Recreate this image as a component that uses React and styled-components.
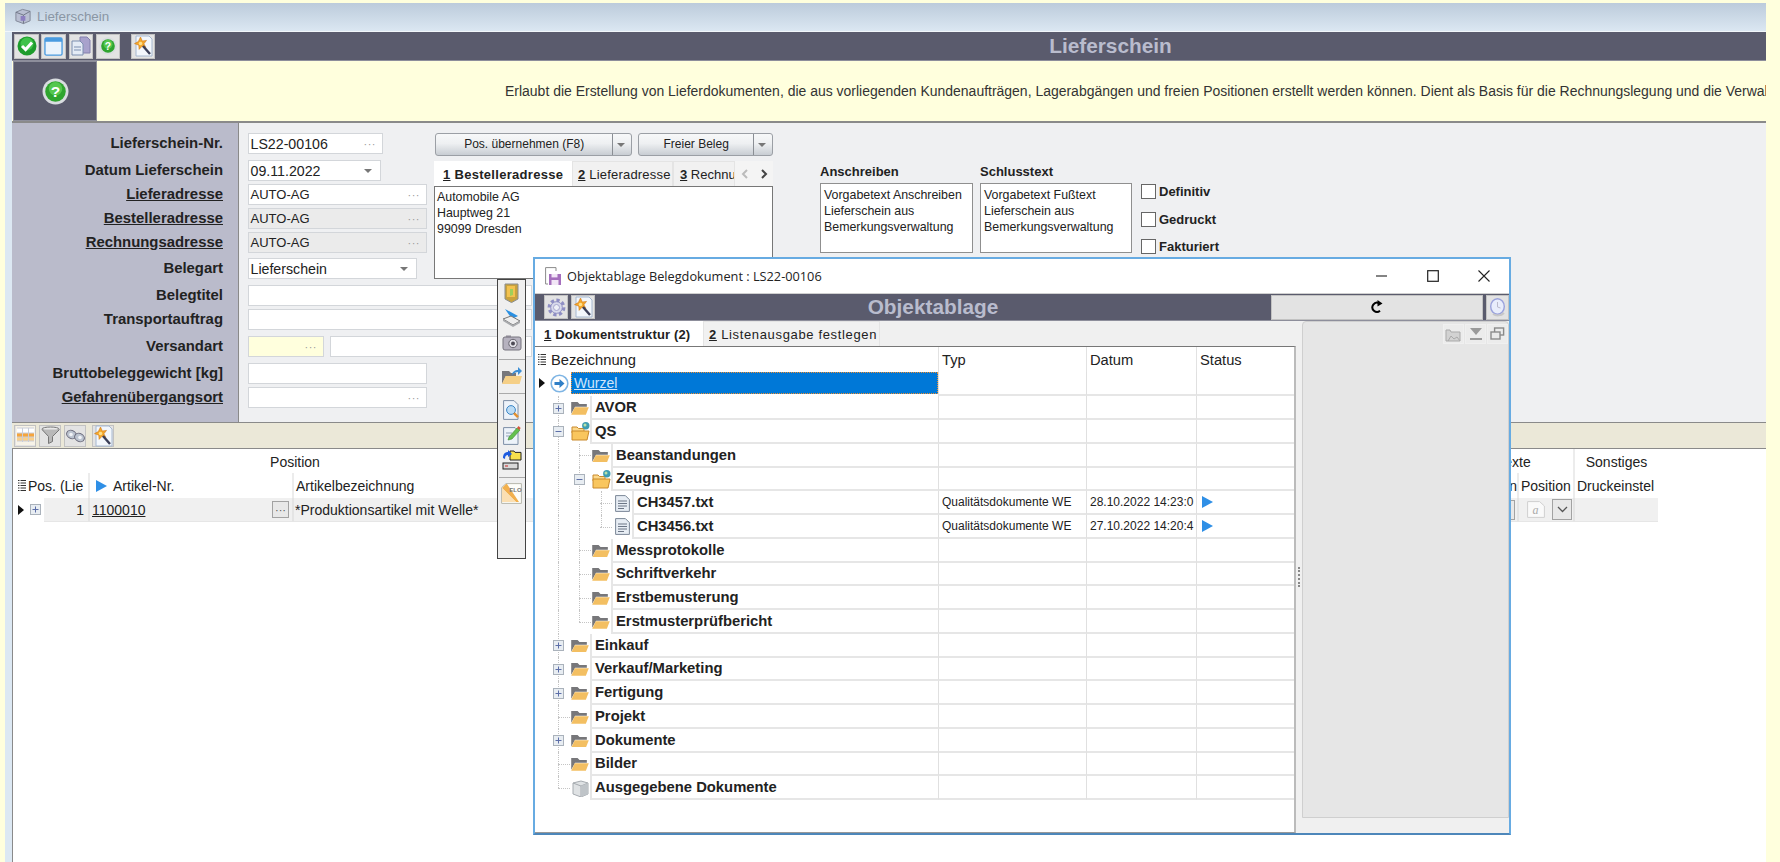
import React from "react";
import styled, { createGlobalStyle } from "styled-components";

const Global = createGlobalStyle`
  html, body { margin: 0; padding: 0; overflow: hidden; background: #ffffdd; }
  * { box-sizing: border-box; }
`;

/* ---------- icons ---------- */
const CheckIcon = () => (
  <svg width="20" height="20" viewBox="0 0 20 20"><circle cx="10" cy="10" r="9.5" fill="#1e9c2c" /><circle cx="10" cy="8" r="6.5" fill="#3fc24a" /><path d="M5 10l3.6 3.6L15 6.6" fill="none" stroke="#fff" strokeWidth="3" /></svg>
);
const WindowIcon = () => (
  <svg width="19" height="19" viewBox="0 0 20 20"><rect x="1" y="1" width="18" height="18" rx="1.5" fill="#eaf3fc" stroke="#4a9be0" strokeWidth="1.4" /><rect x="1" y="1" width="18" height="4" fill="#4a9be0" /></svg>
);
const PagesIcon = () => (
  <svg width="20" height="20" viewBox="0 0 20 20"><path d="M9 1h7l3 3v13H9z" fill="#a8a2cc" stroke="#8480ad" /><path d="M1 5h8l3 3v11H1z" fill="#e4ebf5" stroke="#7d8fb0" /><path d="M3 11h7M3 14h7" stroke="#7d8fb0" /></svg>
);
const HelpSmallIcon = ({ s = 18 }) => (
  <svg width={s} height={s} viewBox="0 0 20 20"><circle cx="10" cy="10" r="9.6" fill="#d9dde0" /><circle cx="10" cy="10" r="7.6" fill="#2fa52f" /><circle cx="10" cy="8" r="5" fill="#55c74f" /><text x="10" y="14" textAnchor="middle" fontFamily="Liberation Sans" fontWeight="700" fontSize="11.5" fill="#fff">?</text></svg>
);
const WandIcon = () => (
  <svg width="20" height="22" viewBox="0 0 20 22"><path d="M3 1h13l3 3v17H3z" fill="#f3f7fc" stroke="#a6b8d0" /><path d="M7.500 2l1.800 4 4.200-.6-2.600 3.400 2 3.600-4-1-2.800 3-.3-4.200L1.500 8.600l3.800-2z" fill="#f4a62a" stroke="#d07a1c" strokeWidth=".6" /><circle cx="7.500" cy="8.500" r="1.800" fill="#fde08a" /><path d="M10 11l7 8" stroke="#3b3f58" strokeWidth="2.400" /></svg>
);
const TableIcon = () => (
  <svg width="19" height="19" viewBox="0 0 19 19"><rect width="19" height="19" fill="#f7f3e7" /><path d="M1 7h17v4H1z" fill="#f6a53b" /><path d="M1 11h17v4H1z" fill="#f9d08c" /><path d="M1 2h17v5H1z" fill="#fff" /><path d="M1 2h17M1 7h17M1 11h17M1 15h17M6.500 2v14M12.500 2v14" stroke="#c9cdd8" fill="none" /></svg>
);
const FunnelIcon = () => (
  <svg width="19" height="19" viewBox="0 0 19 19"><ellipse cx="9.500" cy="3" rx="8.500" ry="2" fill="#e8e8e8" stroke="#777" /><path d="M1 3.500l6.500 7v7l4-2v-5l7-7" fill="#b9b9b9" stroke="#777" /></svg>
);
const BinocularsIcon = () => (
  <svg width="19" height="15" viewBox="0 0 19 15"><ellipse cx="5.500" cy="6.500" rx="5" ry="4" fill="#bcc4d0" stroke="#667" transform="rotate(25 5.500 6.500)" /><ellipse cx="13.500" cy="9.500" rx="5" ry="4" fill="#bcc4d0" stroke="#667" transform="rotate(25 13.500 9.500)" /><circle cx="5" cy="6.500" r="1.800" fill="#f1f3f6" /><circle cx="14" cy="9.500" r="1.800" fill="#f1f3f6" /></svg>
);
const FolderOpen = ({ w = 18 }) => (
  <svg width={w} height={w * 0.76} viewBox="0 0 18 14"><path d="M0 1h6.500l2 2H16v3H4L0 13z" fill="#77777a" /><path d="M3.600 6.500H18L15 14H0z" fill="#f3bf62" /></svg>
);
const FolderGlobe = () => (
  <svg width="19" height="19" viewBox="0 0 19 19"><path d="M1 5h5l1.500 1.500H13V11H1z" fill="#fcd98c" stroke="#c98a2c" /><path d="M1 18V9h17l-2 9z" fill="#f9c65e" stroke="#c98a2c" /><circle cx="14.800" cy="3.800" r="3.700" fill="#3f9db2" /><circle cx="14" cy="3" r="1.500" fill="#b8e2a8" /></svg>
);
const DocIcon = () => (
  <svg width="15" height="17" viewBox="0 0 15 17"><path d="M.6.6h9.800L14.400 4.600v11.800H.6z" fill="#e7edf4" stroke="#7b8797" /><path d="M3 6h9M3 8.500h9M3 11h9M3 13.500h6" stroke="#6c7686" /></svg>
);
const CubeIcon = () => (
  <svg width="17" height="17" viewBox="0 0 17 17"><path d="M1 3l8-2 7 2v11l-7 3-8-3z" fill="#dfe2e4" stroke="#a6abb0" /><path d="M1 3l8 3 7-3M9 6v11" fill="none" stroke="#a6abb0" /><path d="M9 6l7-3v11l-7 3z" fill="#bfc4c8" /></svg>
);
const ListGlyph = () => (
  <svg width="8" height="12" viewBox="0 0 8 12"><path d="M0 .5h1.500M2.500 .5H8M0 3h1.500M2.500 3H8M0 5.500h1.500M2.500 5.500H8M0 8h1.500M2.500 8H8M0 10.500h1.500M2.500 10.500H8" stroke="#333" /></svg>
);
const RowMark = () => (
  <svg width="6" height="10" viewBox="0 0 6 10"><path d="M0 0l6 5-6 5z" fill="#111" /></svg>
);
const BluePlay = ({ w = 11, h = 12 }) => (
  <svg width={w} height={h} viewBox="0 0 11 12"><path d="M0 0l11 6L0 12z" fill="#2f8fe6" /></svg>
);
const Gear = () => (
  <svg width="19" height="19" viewBox="0 0 19 19"><circle cx="9.500" cy="9.500" r="7.200" fill="none" stroke="#8f8fc4" strokeWidth="3.400" strokeDasharray="3.200 2.400" /><circle cx="9.500" cy="9.500" r="5.800" fill="#d9dbec" stroke="#8f8fc4" /><circle cx="9.500" cy="9.500" r="3" fill="#eef0f7" stroke="#a6a6cd" /></svg>
);
const Refresh = () => (
  <svg width="14" height="14" viewBox="0 0 14 14"><path d="M10 10.800A4.600 4.600 0 1 1 9.200 3.200" fill="none" stroke="#000" strokeWidth="2" /><path d="M7.500 0l5 3.400-5 3z" fill="#000" /></svg>
);
const Clock = () => (
  <svg width="16" height="19" viewBox="0 0 16 19"><ellipse cx="7.500" cy="8.500" rx="6.800" ry="7.800" fill="#e8edfb" stroke="#9aa2dc" strokeWidth="1.400" /><path d="M7.500 4v5l3 1" stroke="#bbc" fill="none" /><path d="M3 16c3 2 8 2 11-1" stroke="#c7c7c7" strokeWidth="2" fill="none" /></svg>
);
const WinMin = () => <svg width="12" height="12" viewBox="0 0 12 12"><path d="M0 6h11" stroke="#333" strokeWidth="1.200" /></svg>;
const WinMax = () => <svg width="12" height="12" viewBox="0 0 12 12"><rect x=".7" y=".7" width="10.600" height="10.600" fill="none" stroke="#222" strokeWidth="1.200" /></svg>;
const WinClose = () => <svg width="12" height="12" viewBox="0 0 12 12"><path d="M.5.5l11 11M11.500.5l-11 11" stroke="#222" strokeWidth="1.100" /></svg>;
const AppCube = () => (
  <svg width="18" height="17" viewBox="0 0 19 17"><path d="M2 4l7-3 8 2v10l-7 3-8-3z" fill="#b9bfd2" stroke="#7f8595" /><path d="M2 4l8 3 7-4M10 7v9" fill="none" stroke="#6f7585" /><rect x="7" y="8" width="5" height="5" fill="#8d7fc0" /></svg>
);
const FloppyDoc = () => (
  <svg width="17" height="19" viewBox="0 0 17 19"><path d="M3 17H.6V.6H11V4" fill="none" stroke="#8a8a8a" /><path d="M4 7h12v11H4z" fill="#a56fbd" /><rect x="6.500" y="7" width="6" height="3.400" fill="#f2e6f6" /><rect x="6.500" y="13" width="7" height="5" fill="#f2e6f6" /></svg>
);
const DoorIcon = () => (
  <svg width="15" height="20" viewBox="0 0 15 20"><path d="M1 1h13v15l-6.500 3.600L1 16z" fill="#c9a23c" stroke="#8a8d8f" /><path d="M3 3h8v11H3z" fill="#f3c24f" /><path d="M6 6h3v6l-3 1z" fill="#9fcf5a" /></svg>
);
const ScannerIcon = () => (
  <svg width="19" height="19" viewBox="0 0 19 19"><path d="M3 1l13 7-6 3z" fill="#2a90e2" /><path d="M1 11l8-3 9 5-7 4z" fill="#eee" stroke="#777" /><path d="M1 11v2l10 6 7-4v-2l-7 4z" fill="#a9abae" /></svg>
);
const CameraIcon = () => (
  <svg width="20" height="16" viewBox="0 0 20 16"><rect x="1" y="2" width="18" height="13" rx="2" fill="#b6b2bf" stroke="#77747f" /><rect x="4" y=".5" width="5" height="2" fill="#8c8894" /><circle cx="11" cy="8.500" r="4.200" fill="#e3e1e8" stroke="#66636d" /><circle cx="11" cy="8.500" r="2" fill="#4d4a55" /></svg>
);
const FolderShareIcon = () => (
  <svg width="20" height="17" viewBox="0 0 20 17"><path d="M0 4h7l2 2h5v3H4L0 17z" fill="#77777a" /><path d="M3.600 9H20l-2.400 8H0z" fill="#f5cf86" /><path d="M10 8c0-3 3-5 6-5V0l4 4-4 4V5c-2 0-4 1-6 3z" fill="#3d8fd6" /></svg>
);
const DocSearchIcon = () => (
  <svg width="17" height="20" viewBox="0 0 17 20"><path d="M.6.6h10.400L15 4.600v14.800H.6z" fill="#edf3fa" stroke="#7c8ea6" /><circle cx="8" cy="10" r="4.400" fill="#bcdcf5" stroke="#3a86c6" /><path d="M11 13.200l4 4" stroke="#e2902f" strokeWidth="2.400" /></svg>
);
const DocEditIcon = () => (
  <svg width="18" height="20" viewBox="0 0 18 20"><path d="M.6 2.600h11.400l3 3v13.800H.6z" fill="#edf3fa" stroke="#7c8ea6" /><path d="M3 8h6M3 11h4" stroke="#8fa0b5" /><path d="M5 15l1-3 8-9 3 2-8 9z" fill="#63c14f" stroke="#3f8a34" strokeWidth=".6" /><path d="M14 3l1.500-2 2.200 2-1.400 2z" fill="#d8573c" /></svg>
);
const TransferIcon = () => (
  <svg width="20" height="21" viewBox="0 0 20 21"><path d="M8 2h4l1 1.400h6V11H8z" fill="#f6e04c" stroke="#222" /><path d="M1 9c0-4 2-6 5-6V1l4 4-4 3V6C4 6 3 7 3 10z" fill="#1e5ce0" /><rect x="1" y="14" width="15" height="6" fill="#d8d8d8" stroke="#222" /><path d="M3 17h3" stroke="#c22" /></svg>
);
const EloIcon = () => (
  <svg width="21" height="21" viewBox="0 0 21 21"><path d="M.6 4.600L5 .6h15.400v19.800H.6z" fill="#fdfdf9" stroke="#b7b7ad" /><path d="M1 5l4-4 1 0 12 18h-3z" fill="#f2b04e" /><path d="M1 5l14 14H1z" fill="#fbdfb2" /><text x="14.500" y="9" textAnchor="middle" fontFamily="Liberation Sans" fontWeight="700" fontSize="6" fill="#777">ELO</text></svg>
);
const PaneFolder = () => (
  <svg width="17" height="17" viewBox="0 0 17 17"><path d="M1 4h4l1 2h9v9H1z" fill="#d2d2d2" stroke="#a9a9a9" /><path d="M3 15l3-5 3 3 3-2 3 4" fill="none" stroke="#a9a9a9" /></svg>
);
const PaneDown = () => (
  <svg width="14" height="14" viewBox="0 0 14 14"><path d="M1 1h12L7 8z" fill="#9a9a9a" /><rect x="1" y="11" width="12" height="2" fill="#9a9a9a" /></svg>
);
const PaneRestore = () => (
  <svg width="15" height="14" viewBox="0 0 15 14"><rect x="4.600" y="1" width="9" height="7" fill="none" stroke="#8a8a8a" strokeWidth="1.400" /><rect x="1" y="5" width="9" height="7" fill="#e9e9e9" stroke="#8a8a8a" strokeWidth="1.400" /></svg>
);
const TextA = () => (
  <svg width="18" height="17" viewBox="0 0 18 17"><path d="M.6.6h12L17.400 5v11.400H.6z" fill="#fafafa" stroke="#d0d0d0" /><text x="8.500" y="12.500" textAnchor="middle" fontFamily="Liberation Serif" fontStyle="italic" fontSize="12" fill="#aaa">a</text></svg>
);
const Chevron = () => (
  <svg width="11" height="7" viewBox="0 0 11 7"><path d="M1 1l4.500 4.500L10 1" fill="none" stroke="#555" strokeWidth="1.300" /></svg>
);
const ArrowCircle = () => (
  <svg width="19" height="19" viewBox="0 0 19 19"><circle cx="9.500" cy="9.500" r="8.300" fill="#fff" stroke="#7fb5e4" strokeWidth="1.600" /><path d="M4.500 8h5V5l5 4.500-5 4.500v-3h-5z" fill="#2f7fc7" /></svg>
);
const ExpandBox = ({ open }) => (
  <svg width="11" height="11" viewBox="0 0 11 11"><rect x=".5" y=".5" width="10" height="10" fill="#e8edf2" stroke="#aab2bb" /><path d={open ? "M2.500 5.500h6" : "M2.500 5.500h6M5.500 2.500v6"} stroke="#5c6ea8" /></svg>
);

/* ---------- shell ---------- */
const Page = styled.div`
  position: relative;
  width: 1780px;
  height: 862px;
  padding: 3px 14px 0 5px;
  overflow: hidden;
  background: #ffffdd;
  color: #222;
  font-family: "Liberation Sans", Arial, sans-serif;
`;
const MainWindow = styled.div`
  display: flex;
  flex-direction: column;
  height: 859px;
  background: #dce8f3;
`;
const TitleBar = styled.div`
  display: flex;
  align-items: center;
  gap: 5px;
  height: 29px;
  padding: 0 0 1px 9px;
  border-bottom: 1px solid #f1f6fa;
  background: linear-gradient(#bccbdb, #dbe7f2);
  color: #8a96a4;
  font-size: 13.4px;
`;
const Shell = styled.div`
  display: flex;
  flex: 1;
  flex-direction: column;
  min-height: 0;
  margin-left: 7px;
  background: #fff;
`;
const TopBar = styled.div`
  display: flex;
  align-items: center;
  height: 29px;
  padding-left: 2px;
  border-bottom: 1px solid #8d8e9b;
  background: #5a5b6d;
`;
const ToolButton = styled.div`
  display: flex;
  flex: none;
  align-items: center;
  justify-content: center;
  width: ${(p) => p.$w || 25}px;
  height: ${(p) => p.$h || 25}px;
  margin-left: ${(p) => p.$ml || 0}px;
  border: 1px solid #c2c2c2;
  background: #e3e3e3;
`;
const BarTitle = styled.div`
  flex: 1;
  padding-left: ${(p) => p.$pl || 0}px;
  color: #b9bccd;
  font-size: 20.800px;
  font-weight: 700;
  text-align: center;
`;
const HelpRow = styled.div`
  display: flex;
  align-items: center;
  height: 62px;
  border-bottom: 2px solid #8a8a8a;
  background: #ffffdd;
`;
const HelpTile = styled.div`
  display: flex;
  flex: none;
  align-items: center;
  justify-content: center;
  width: 84px;
  height: 60px;
  margin-left: 1px;
  border: 1px solid #8d8e9b;
  background: #5a5b6d;
`;
const HelpText = styled.div`
  flex: 1;
  overflow: hidden;
  padding-left: 408px;
  color: #333;
  font-size: 13.970px;
  white-space: nowrap;
`;
const FormArea = styled.div`
  display: flex;
  flex: none;
  height: 299px;
`;
const LabelColumn = styled.div`
  flex: none;
  width: 226px;
  padding-top: 10px;
  background: #babbcb;
`;
const FormLabel = styled.div`
  height: 21px;
  margin-top: ${(p) => p.$gap}px;
  padding-right: 15px;
  font-size: 14.900px;
  font-weight: 700;
  line-height: 21px;
  text-align: right;
  text-decoration: ${(p) => (p.$link ? "underline" : "none")};
`;
const FormBody = styled.div`
  flex: 1;
  padding: 10px 0 0 9px;
  border-left: 1px solid #8a8a8a;
  background: #eff0f2;
`;
const TopBlock = styled.div`
  display: flex;
  height: 146px;
`;
const FieldStack = styled.div`
  flex: none;
  width: ${(p) => p.$w || "auto"};
`;
const FieldRow = styled.div`
  display: flex;
  gap: 6px;
  margin-top: ${(p) => p.$gap}px;
`;
const Field = styled.div`
  display: flex;
  align-items: center;
  justify-content: space-between;
  width: ${(p) => p.$w}px;
  height: 21px;
  padding: 0 6px 0 1.500px;
  border: 1.500px solid #d3d6da;
  background: ${(p) => p.$bg || "#fff"};
  font-size: ${(p) => p.$fs || 14.200}px;
`;
const Dots = styled.span`
  color: #9a9a9a;
  font-size: 11px;
  letter-spacing: 0.5px;
`;
const Caret = styled.span`
  width: 0;
  height: 0;
  margin-right: 2px;
  border-top: 4px solid #777;
  border-right: 4px solid transparent;
  border-left: 4px solid transparent;
`;
const AddressBlock = styled.div`
  flex: none;
  width: 339px;
`;
const ButtonRow = styled.div`
  display: flex;
  gap: 6px;
  margin-left: 1px;
`;
const SplitButton = styled.div`
  display: grid;
  grid-template-columns: 1fr 18px;
  width: ${(p) => p.$w}px;
  height: 23px;
  overflow: hidden;
  border: 1px solid #9b9fa5;
  border-radius: 3px;
  background: linear-gradient(#f7f8f9, #eef0f2 45%, #c8cdd3);
  font-size: 12px;
`;
const SplitLabel = styled.div`
  border-right: 1px solid #8a8e94;
  line-height: 21px;
  text-align: center;
`;
const SplitArrow = styled.div`
  display: flex;
  align-items: center;
  justify-content: center;
`;
const TabStrip = styled.div`
  display: flex;
  align-items: stretch;
  height: 25px;
  margin-top: ${(p) => p.$mt || 0}px;
`;
const Tab = styled.div`
  flex: none;
  width: ${(p) => p.$w}px;
  padding-left: ${(p) => p.$pl ?? 9}px;
  overflow: hidden;
  border: 1px solid ${(p) => (p.$active ? "#fff" : "#e4e4e4")};
  border-bottom: 0;
  background: ${(p) => (p.$active ? "#fff" : "#f1f1f1")};
  font-size: 13px;
  font-weight: ${(p) => (p.$active ? 700 : 400)};
  letter-spacing: ${(p) => p.$ls ?? 0.2}px;
  line-height: 25px;
  white-space: nowrap;
`;
const TabKey = styled.span`
  font-weight: 700;
  text-decoration: underline;
`;
const TabNav = styled.div`
  display: flex;
  flex: 1;
  align-items: center;
  justify-content: space-around;
  background: #f4f4f4;
`;
const TextBox = styled.div`
  height: ${(p) => p.$h}px;
  padding: ${(p) => p.$pad || "2px 2px"};
  border: 1px solid ${(p) => p.$bc || "#777"};
  background: #fff;
  font-size: 12.400px;
  line-height: 16px;
  white-space: pre-line;
`;
const NoteGroup = styled.div`
  flex: none;
  width: ${(p) => p.$w}px;
  margin-left: ${(p) => p.$ml}px;
  padding-top: 30px;
`;
const NoteTitle = styled.div`
  height: 20px;
  font-size: 13px;
  font-weight: 700;
  line-height: 17px;
`;
const CheckColumn = styled.div`
  flex: none;
  margin-left: 9px;
  padding-top: 51px;
`;
const CheckRow = styled.div`
  display: flex;
  align-items: center;
  gap: 3px;
  height: 15px;
  margin-bottom: ${(p) => p.$mb}px;
  font-size: 13px;
  font-weight: 700;
`;
const CheckBox = styled.span`
  width: 15px;
  height: 15px;
  border: 1px solid #666;
  background: #fff;
`;
const LowerBar = styled.div`
  display: flex;
  flex: none;
  align-items: center;
  height: 27px;
  padding-left: 2px;
  border-top: 1px solid #8a8a8a;
  border-bottom: 1px solid #8a8a8a;
  background: #ebe8d8;
`;

/* ---------- lower grid ---------- */
const LowerGrid = styled.div`
  display: grid;
  flex: 1;
  grid-template-columns: 13px 62px 204px 272px 799px 154px 56px 85px;
  grid-template-rows: 24px 25px 24px 1fr;
  border-left: 1px solid #8a8a8a;
  font-size: 14px;
`;
const GroupHead = styled.div`
  grid-column: ${(p) => p.$col};
  padding-top: 5px;
  padding-left: ${(p) => p.$pl || 0}px;
  border-left: ${(p) => (p.$sep ? "2px solid #ececec" : "0")};
  text-align: center;
  white-space: nowrap;
`;
const ColHead = styled.div`
  display: flex;
  align-items: center;
  justify-content: ${(p) => p.$justify || "flex-start"};
  gap: 6px;
  height: 25px;
  padding-left: ${(p) => p.$pl ?? 2}px;
  border-left: ${(p) => (p.$sep ? "2px solid #ececec" : "0")};
  white-space: nowrap;
`;
const GridCell = styled.div`
  display: flex;
  align-items: center;
  justify-content: ${(p) => p.$justify || "flex-start"};
  gap: 4px;
  height: 24px;
  padding: 0 ${(p) => p.$pr || 0}px 0 ${(p) => p.$pl || 0}px;
  border-bottom: 1px solid #e6e6e6;
  border-left: ${(p) => (p.$sep ? "2px solid #e4e4e4" : "0")};
  background: ${(p) => p.$bg || "#f0f0f0"};
  white-space: nowrap;
`;
const GutterCell = styled.div`
  display: flex;
  align-items: center;
  padding-left: 5px;
`;
const ExpandGap = styled.div`
  display: flex;
  align-items: center;
  width: 18px;
  height: 24px;
  padding-left: 4px;
  background: #fff;
`;
const LinkText = styled.span`
  text-decoration: underline;
`;
const MiniButton = styled.div`
  display: flex;
  align-items: center;
  justify-content: center;
  width: ${(p) => p.$w || 17}px;
  height: ${(p) => p.$h || 17}px;
  margin-left: auto;
  margin-right: ${(p) => p.$mr || 0}px;
  border: 1px solid #a2a2a2;
  background: #e8e8e8;
  color: #555;
  font-size: 11px;
`;

/* ---------- popup toolbar ---------- */
const SideBar = styled.div`
  position: absolute;
  top: 279px;
  left: 497px;
  z-index: 1;
  display: flex;
  flex-direction: column;
  align-items: center;
  width: 29px;
  height: 280px;
  border: 1px solid #444;
  background: #efefef;
`;
const SideSlot = styled.div`
  display: flex;
  flex: none;
  align-items: center;
  justify-content: center;
  width: 100%;
  height: 25px;
  margin-top: ${(p) => p.$mt || 0}px;
`;
const SideRule = styled.div`
  flex: none;
  width: 26px;
  height: 1px;
  margin-top: ${(p) => p.$mt}px;
  background: #aaa;
`;

/* ---------- dialog ---------- */
const Dialog = styled.div`
  position: absolute;
  top: 257px;
  left: 533px;
  z-index: 2;
  display: flex;
  flex-direction: column;
  width: 978px;
  height: 578px;
  border: 2px solid #67abe2;
  border-bottom-color: #4d87ba;
  background: #fff;
`;
const DialogTitle = styled.div`
  display: flex;
  flex: none;
  align-items: center;
  height: 34px;
  padding-left: 10px;
  color: #222;
  font-family: "Open Sans", "Liberation Sans", sans-serif;
  font-size: 12.750px;
`;
const DialogCaption = styled.div`
  flex: 1;
  margin-left: 5px;
`;
const WinButton = styled.div`
  display: flex;
  align-items: center;
  justify-content: center;
  width: 51px;
  height: 34px;
`;
const DialogBar = styled.div`
  display: flex;
  flex: none;
  align-items: center;
  height: 28px;
  padding-left: 9px;
  border-top: 1px solid #d0d0d0;
  border-bottom: 1px solid #8d8e9b;
  background: #5a5b6d;
`;
const DialogBody = styled.div`
  display: flex;
  flex: 1;
  min-height: 0;
  background: #f0f0f0;
`;
const TreePane = styled.div`
  display: flex;
  flex: none;
  flex-direction: column;
  width: 761px;
`;
const TreeBox = styled.div`
  flex: 1;
  border-top: 1px solid #777;
  border-right: 2px solid #bbb;
  border-bottom: 1px solid #999;
  background: #fff;
`;
const TreeHead = styled.div`
  display: grid;
  grid-template-columns: 12px 391px 148px 110px 98px;
  height: 25px;
  font-size: 14.700px;
`;
const TreeHeadCell = styled.div`
  display: flex;
  align-items: center;
  padding-top: 1px;
  padding-left: ${(p) => p.$pl ?? 3}px;
  border-left: ${(p) => (p.$sep ? "1px solid #e2e2e2" : "0")};
`;
const TreeRow = styled.div`
  position: relative;
  display: grid;
  grid-template-columns: 403px 148px 110px 98px;
  height: 23.760px;
`;
const NameArea = styled.div`
  display: flex;
  align-items: center;
  padding-left: ${(p) => 18 + p.$level * 21}px;
`;
const ExpSlot = styled.div`
  position: relative;
  z-index: 1;
  display: flex;
  flex: none;
  width: 17px;
  height: 11px;
`;
const IconSlot = styled.div`
  position: relative;
  z-index: 1;
  display: flex;
  flex: none;
  align-items: center;
  justify-content: center;
  width: 20px;
  height: 100%;
`;
const NameCell = styled.div`
  flex: 1;
  align-self: stretch;
  padding-left: 3px;
  border-bottom: 2px solid #e6e6e6;
  border-left: 2px solid #e6e6e6;
  font-size: 14.800px;
  font-weight: 700;
  line-height: 22px;
  white-space: nowrap;
`;
const DataCell = styled.div`
  display: flex;
  align-items: center;
  overflow: hidden;
  padding-left: ${(p) => p.$pl ?? 3}px;
  border-bottom: 2px solid #e6e6e6;
  border-left: 1px solid #e0e0e0;
  font-size: 12px;
  white-space: nowrap;
`;
const Guide = styled.span`
  position: absolute;
  top: 0;
  bottom: ${(p) => (p.$half ? "50%" : "0")};
  left: ${(p) => p.$x}px;
  border-left: 1px dotted #c4c4c4;
`;
const Stub = styled.span`
  position: absolute;
  top: 50%;
  left: ${(p) => p.$x}px;
  width: ${(p) => p.$w}px;
  border-top: 1px dotted #c4c4c4;
`;
const RootRow = styled.div`
  display: grid;
  grid-template-columns: 403px 148px 110px 98px;
  height: 24px;
`;
const RootName = styled.div`
  display: flex;
  align-items: center;
  height: 22px;
  padding-left: 2px;
`;
const RootMark = styled.div`
  display: flex;
  flex: none;
  align-items: center;
  width: 13px;
  padding-left: 2px;
`;
const RootIcon = styled.div`
  display: flex;
  flex: none;
  width: 21px;
`;
const RootSelect = styled.div`
  flex: 1;
  height: 22px;
  padding-left: 2px;
  border: 1px dotted #f09030;
  background: #0078d7;
  color: #cfe6fb;
  font-size: 14px;
  line-height: 20px;
  text-decoration: underline;
`;
const Splitter = styled.div`
  display: flex;
  flex: none;
  align-items: center;
  justify-content: center;
  width: 6px;
`;
const Grip = styled.div`
  width: 2px;
  height: 20px;
  border-left: 2px dotted #888;
`;
const SidePane = styled.div`
  display: flex;
  flex: 1;
  flex-direction: column;
`;
const SideCard = styled.div`
  display: flex;
  justify-content: flex-end;
  gap: 1px;
  height: 497px;
  padding-top: 2px;
  border: 1px solid #cfcfcf;
  border-radius: 4px 4px 0 0;
  background: #e6e6e6;
`;
const PaneButton = styled.div`
  display: flex;
  align-items: center;
  justify-content: center;
  width: 21px;
  height: 20px;
  border: 1px solid #f0f0f0;
  background: #ececec;
`;

/* ---------- data ---------- */
const upperRows = [
  { label: "Lieferschein-Nr.", gap: 0 },
  { label: "Datum Lieferschein", gap: 6 },
  { label: "Lieferadresse", gap: 3, link: true },
  { label: "Bestelleradresse", gap: 3, link: true },
  { label: "Rechnungsadresse", gap: 3, link: true },
  { label: "Belegart", gap: 5 },
];
const lowerRows = [
  { label: "Belegtitel", gap: 6 },
  { label: "Transportauftrag", gap: 3 },
  { label: "Versandart", gap: 6 },
  { label: "Bruttobeleggewicht [kg]", gap: 6 },
  { label: "Gefahrenübergangsort", gap: 3, link: true },
];
const treeRows = [
  { name: "AVOR", level: 0, exp: "+", icon: "folder", guides: [23] },
  { name: "QS", level: 0, exp: "-", icon: "globe", guides: [23] },
  { name: "Beanstandungen", level: 1, icon: "folder", guides: [23, 44] },
  { name: "Zeugnis", level: 1, exp: "-", icon: "globe", guides: [23, 44] },
  { name: "CH3457.txt", level: 2, icon: "doc", guides: [23, 44, 66], typ: "Qualitätsdokumente WE", date: "28.10.2022 14:23:0" },
  { name: "CH3456.txt", level: 2, icon: "doc", guides: [23, 44, 66], half: 66, typ: "Qualitätsdokumente WE", date: "27.10.2022 14:20:4" },
  { name: "Messprotokolle", level: 1, icon: "folder", guides: [23, 44] },
  { name: "Schriftverkehr", level: 1, icon: "folder", guides: [23, 44] },
  { name: "Erstbemusterung", level: 1, icon: "folder", guides: [23, 44] },
  { name: "Erstmusterprüfbericht", level: 1, icon: "folder", guides: [23, 44], half: 44 },
  { name: "Einkauf", level: 0, exp: "+", icon: "folder", guides: [23] },
  { name: "Verkauf/Marketing", level: 0, exp: "+", icon: "folder", guides: [23] },
  { name: "Fertigung", level: 0, exp: "+", icon: "folder", guides: [23] },
  { name: "Projekt", level: 0, icon: "folder", guides: [23] },
  { name: "Dokumente", level: 0, exp: "+", icon: "folder", guides: [23] },
  { name: "Bilder", level: 0, icon: "folder", guides: [23] },
  { name: "Ausgegebene Dokumente", level: 0, icon: "cube", guides: [23], half: 23 },
];
const rowIcons = { folder: <FolderOpen />, globe: <FolderGlobe />, doc: <DocIcon />, cube: <CubeIcon /> };

const App = () => (
  <Page>
    <Global />
    <MainWindow>
      <TitleBar><AppCube />Lieferschein</TitleBar>
      <Shell>
        <TopBar>
          <ToolButton><CheckIcon /></ToolButton>
          <ToolButton $ml={2}><WindowIcon /></ToolButton>
          <ToolButton $ml={3} $w={24}><PagesIcon /></ToolButton>
          <ToolButton $ml={3} $w={24}><HelpSmallIcon /></ToolButton>
          <ToolButton $ml={11} $w={24}><WandIcon /></ToolButton>
          <BarTitle $pl={300}>Lieferschein</BarTitle>
        </TopBar>
        <HelpRow>
          <HelpTile><HelpSmallIcon s={27} /></HelpTile>
          <HelpText>Erlaubt die Erstellung von Lieferdokumenten, die aus vorliegenden Kundenaufträgen, Lagerabgängen und freien Positionen erstellt werden können. Dient als Basis für die Rechnungslegung und die Verwaltung</HelpText>
        </HelpRow>
        <FormArea>
          <LabelColumn>
            {[...upperRows, ...lowerRows].map((r) => (
              <FormLabel key={r.label} $gap={r.gap} $link={r.link}>{r.label}</FormLabel>
            ))}
          </LabelColumn>
          <FormBody>
            <TopBlock>
              <FieldStack $w="186px">
                <FieldRow $gap={0}><Field $w={135}>LS22-00106<Dots>···</Dots></Field></FieldRow>
                <FieldRow $gap={6}><Field $w={133}>09.11.2022<Caret /></Field></FieldRow>
                <FieldRow $gap={3}><Field $w={179} $fs={13}>AUTO-AG<Dots>···</Dots></Field></FieldRow>
                <FieldRow $gap={3}><Field $w={179} $fs={13} $bg="#ebebeb">AUTO-AG<Dots>···</Dots></Field></FieldRow>
                <FieldRow $gap={3}><Field $w={179} $fs={13} $bg="#ebebeb">AUTO-AG<Dots>···</Dots></Field></FieldRow>
                <FieldRow $gap={5}><Field $w={169}>Lieferschein<Caret /></Field></FieldRow>
              </FieldStack>
              <AddressBlock>
                <ButtonRow>
                  <SplitButton $w={198}><SplitLabel>Pos. übernehmen (F8)</SplitLabel><SplitArrow><Caret /></SplitArrow></SplitButton>
                  <SplitButton $w={135}><SplitLabel>Freier Beleg</SplitLabel><SplitArrow><Caret /></SplitArrow></SplitButton>
                </ButtonRow>
                <TabStrip $mt={5}>
                  <Tab $active $w={138} $pl={8} $ls={0.3}><TabKey>1</TabKey> Bestelleradresse</Tab>
                  <Tab $w={101} $pl={5}><TabKey>2</TabKey> Lieferadresse</Tab>
                  <Tab $w={62} $pl={6} $ls={0}><TabKey>3</TabKey> Rechnu</Tab>
                  <TabNav>
                    <svg width="8" height="10" viewBox="0 0 8 10"><path d="M6 1L2 5l4 4" fill="none" stroke="#bbb" strokeWidth="2" /></svg>
                    <svg width="8" height="10" viewBox="0 0 8 10"><path d="M2 1l4 4-4 4" fill="none" stroke="#444" strokeWidth="2" /></svg>
                  </TabNav>
                </TabStrip>
                <TextBox $h={93}>{"Automobile AG\nHauptweg 21\n99099 Dresden"}</TextBox>
              </AddressBlock>
              <NoteGroup $w={153} $ml={47}>
                <NoteTitle>Anschreiben</NoteTitle>
                <TextBox $h={70} $bc="#8f8f8f" $pad="3px 3px">{"Vorgabetext Anschreiben\nLieferschein aus\nBemerkungsverwaltung"}</TextBox>
              </NoteGroup>
              <NoteGroup $w={152} $ml={7}>
                <NoteTitle>Schlusstext</NoteTitle>
                <TextBox $h={70} $bc="#8f8f8f" $pad="3px 3px">{"Vorgabetext Fußtext\nLieferschein aus\nBemerkungsverwaltung"}</TextBox>
              </NoteGroup>
              <CheckColumn>
                <CheckRow $mb={13}><CheckBox />Definitiv</CheckRow>
                <CheckRow $mb={12}><CheckBox />Gedruckt</CheckRow>
                <CheckRow $mb={0}><CheckBox />Fakturiert</CheckRow>
              </CheckColumn>
            </TopBlock>
            <FieldStack>
              <FieldRow $gap={6}><Field $w={284}><span /><Dots>···</Dots></Field></FieldRow>
              <FieldRow $gap={3}><Field $w={284} /></FieldRow>
              <FieldRow $gap={6}>
                <Field $w={76} $bg="#ffffdd"><span /><Dots>···</Dots></Field>
                <Field $w={202}><span /><Dots>···</Dots></Field>
              </FieldRow>
              <FieldRow $gap={6}><Field $w={179} /></FieldRow>
              <FieldRow $gap={3}><Field $w={179}><span /><Dots>···</Dots></Field></FieldRow>
            </FieldStack>
          </FormBody>
        </FormArea>
        <LowerBar>
          <ToolButton $w={22} $h={22}><TableIcon /></ToolButton>
          <ToolButton $w={22} $h={22} $ml={3}><FunnelIcon /></ToolButton>
          <ToolButton $w={22} $h={22} $ml={3}><BinocularsIcon /></ToolButton>
          <ToolButton $w={22} $h={22} $ml={6}><WandIcon /></ToolButton>
        </LowerBar>
        <LowerGrid>
          <GroupHead $col="2 / 5">Position</GroupHead>
          <GroupHead $col="6 / 8" $pl={92}>Texte</GroupHead>
          <GroupHead $col="8 / 9" $sep>Sonstiges</GroupHead>

          <GutterCell><ListGlyph /></GutterCell>
          <ColHead>Pos. (Lie</ColHead>
          <ColHead $sep $pl={6}><BluePlay w={11} h={12} />Artikel-Nr.</ColHead>
          <ColHead $sep>Artikelbezeichnung</ColHead>
          <ColHead />
          <ColHead $justify="flex-end" $pl={0}>Anschreiben</ColHead>
          <ColHead $sep>Position</ColHead>
          <ColHead $sep>Druckeinstel</ColHead>

          <GutterCell><RowMark /></GutterCell>
          <GridCell $justify="space-between" $pr={4}><ExpandGap><ExpandBox /></ExpandGap>1</GridCell>
          <GridCell $sep $pl={2} $pr={3}><LinkText>1100010</LinkText><MiniButton>···</MiniButton></GridCell>
          <GridCell $sep $pl={1}>*Produktionsartikel mit Welle*</GridCell>
          <GridCell />
          <GridCell $justify="flex-end"><MiniButton $w={20} $h={20} $mr={2} /></GridCell>
          <GridCell $sep $pl={8}><TextA /><MiniButton $w={20} $h={21} $mr={1}><Chevron /></MiniButton></GridCell>
          <GridCell $sep />
        </LowerGrid>
      </Shell>
    </MainWindow>

    <SideBar>
      <SideSlot><DoorIcon /></SideSlot>
      <SideSlot><ScannerIcon /></SideSlot>
      <SideSlot><CameraIcon /></SideSlot>
      <SideRule $mt={4} />
      <SideSlot $mt={3}><FolderShareIcon /></SideSlot>
      <SideRule $mt={5} />
      <SideSlot $mt={3}><DocSearchIcon /></SideSlot>
      <SideSlot><DocEditIcon /></SideSlot>
      <SideSlot><TransferIcon /></SideSlot>
      <SideRule $mt={5} />
      <SideSlot $mt={3}><EloIcon /></SideSlot>
    </SideBar>

    <Dialog>
      <DialogTitle>
        <FloppyDoc />
        <DialogCaption>Objektablage Belegdokument : LS22-00106</DialogCaption>
        <WinButton><WinMin /></WinButton>
        <WinButton><WinMax /></WinButton>
        <WinButton><WinClose /></WinButton>
      </DialogTitle>
      <DialogBar>
        <ToolButton $w={24} $h={24}><Gear /></ToolButton>
        <ToolButton $w={24} $h={24} $ml={3}><WandIcon /></ToolButton>
        <BarTitle>Objektablage</BarTitle>
        <ToolButton $w={212} $h={25}><Refresh /></ToolButton>
        <ToolButton $w={23} $h={25} $ml={3}><Clock /></ToolButton>
      </DialogBar>
      <DialogBody>
        <TreePane>
          <TabStrip>
            <Tab $active $w={168} $pl={8} $ls={0.15}><TabKey>1</TabKey> Dokumentstruktur (2)</Tab>
            <Tab $w={177} $pl={5} $ls={0.65}><TabKey>2</TabKey> Listenausgabe festlegen</Tab>
          </TabStrip>
          <TreeBox>
            <TreeHead>
              <TreeHeadCell $pl={3}><ListGlyph /></TreeHeadCell>
              <TreeHeadCell $pl={4}>Bezeichnung</TreeHeadCell>
              <TreeHeadCell $sep>Typ</TreeHeadCell>
              <TreeHeadCell $sep>Datum</TreeHeadCell>
              <TreeHeadCell $sep>Status</TreeHeadCell>
            </TreeHead>
            <RootRow>
              <RootName>
                <RootMark><RowMark /></RootMark>
                <RootIcon><ArrowCircle /></RootIcon>
                <RootSelect>Wurzel</RootSelect>
              </RootName>
              <DataCell />
              <DataCell />
              <DataCell />
            </RootRow>
            {treeRows.map((r) => (
              <TreeRow key={r.name}>
                {r.guides.map((x) => <Guide key={x} $x={x} $half={r.half === x} />)}
                {!r.exp && <Stub $x={23 + r.level * 21} $w={12} />}
                <NameArea $level={r.level}>
                  <ExpSlot>{r.exp && <ExpandBox open={r.exp === "-"} />}</ExpSlot>
                  <IconSlot>{rowIcons[r.icon]}</IconSlot>
                  <NameCell>{r.name}</NameCell>
                </NameArea>
                <DataCell>{r.typ}</DataCell>
                <DataCell>{r.date}</DataCell>
                <DataCell $pl={5}>{r.date && <BluePlay />}</DataCell>
              </TreeRow>
            ))}
          </TreeBox>
        </TreePane>
        <Splitter><Grip /></Splitter>
        <SidePane>
          <SideCard>
            <PaneButton><PaneFolder /></PaneButton>
            <PaneButton><PaneDown /></PaneButton>
            <PaneButton><PaneRestore /></PaneButton>
          </SideCard>
        </SidePane>
      </DialogBody>
    </Dialog>
  </Page>
);

export default App;
